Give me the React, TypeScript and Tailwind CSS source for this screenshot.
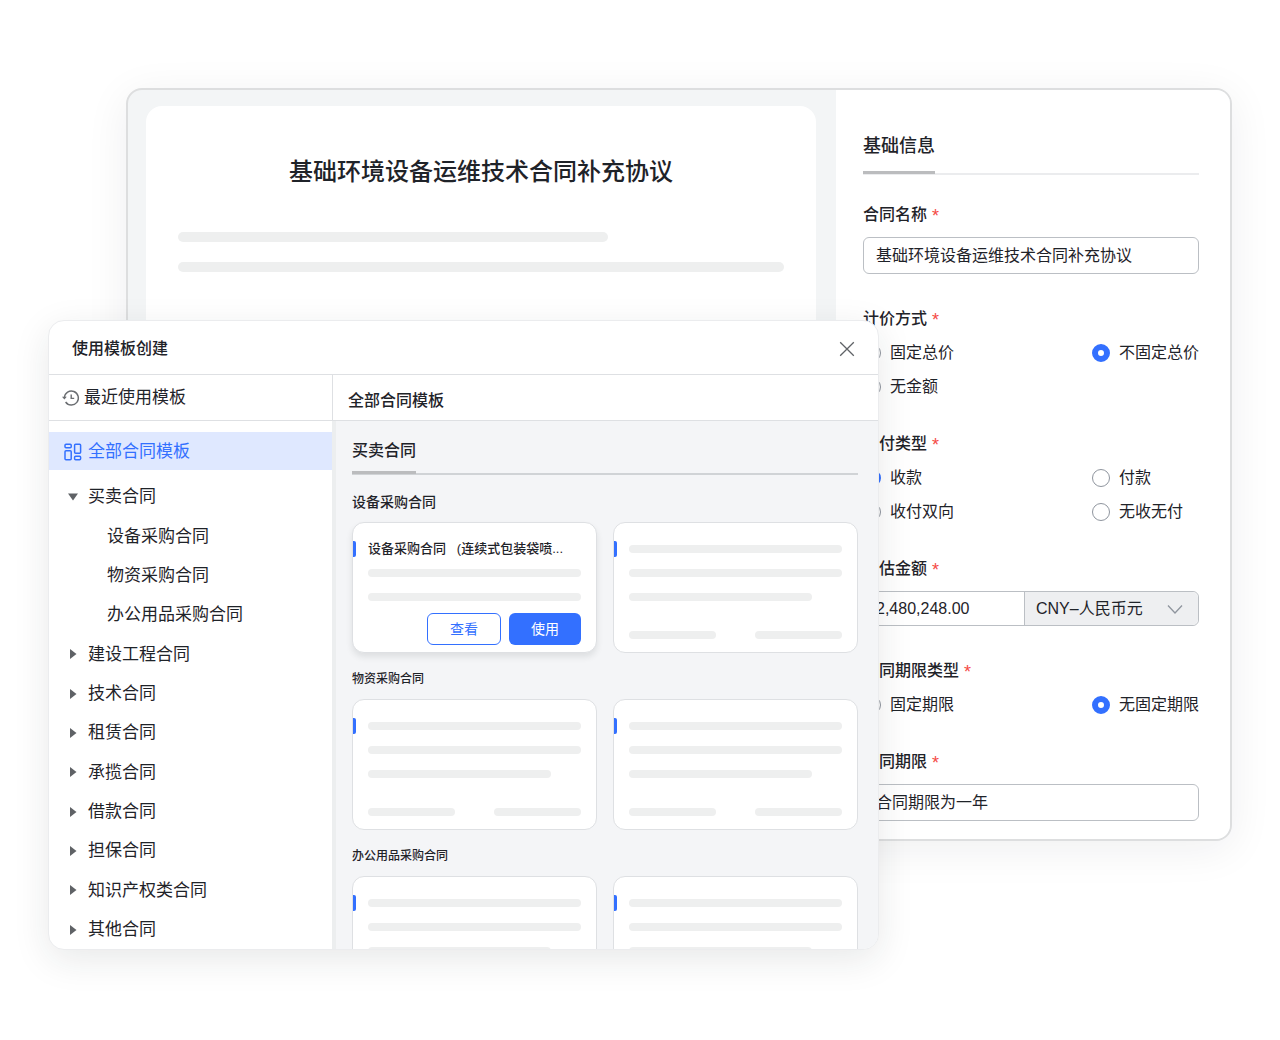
import { useState } from "react";

const categories = [
  { name: "买卖合同", open: true },
  { name: "设备采购合同", child: true },
  { name: "物资采购合同", child: true },
  { name: "办公用品采购合同", child: true },
  { name: "建设工程合同" },
  { name: "技术合同" },
  { name: "租赁合同" },
  { name: "承揽合同" },
  { name: "借款合同" },
  { name: "担保合同" },
  { name: "知识产权类合同" },
  { name: "其他合同" },
];

function HistoryIcon() {
  return (
    <svg className="h-[18px] w-[18px] shrink-0" viewBox="0 0 18 18" fill="none" stroke="#6b6e72" strokeWidth="1.4" aria-hidden="true">
      <path d="M2.4 8.6A7 7 0 1 1 3.6 13" />
      <path d="M9.2 5.6V9.4H12.2" />
      <path d="M0 7.8H4.8L2.4 10.6Z" fill="#6b6e72" stroke="none" />
    </svg>
  );
}

function TemplatesIcon() {
  return (
    <svg className="h-[18px] w-[18px] shrink-0" viewBox="0 0 18 18" fill="none" stroke="#3370ff" strokeWidth="1.5" aria-hidden="true">
      <rect x="1" y="1.2" width="6.2" height="3.6" rx="1" />
      <rect x="1" y="7.8" width="6.2" height="9" rx="1" />
      <rect x="10.6" y="1.2" width="6" height="9" rx="1" />
      <rect x="10.6" y="13.2" width="6" height="3.6" rx="1" />
    </svg>
  );
}

function Caret({ open }: { open?: boolean }) {
  return (
    <svg className="h-3 w-3 shrink-0" viewBox="0 0 12 12" fill="#5f6266" aria-hidden="true">
      <path d={open ? "M1 2.5H11L6 9.5Z" : "M3 1L9.5 6L3 11Z"} />
    </svg>
  );
}

function Bar({ className }: { className: string }) {
  return <div className={`h-2 rounded-full bg-[#eeefef] ${className}`} />;
}

function TemplateCard({ title }: { title?: string }) {
  return (
    <article
      className={`h-[131px] rounded-xl border border-[#dee0e3] bg-white pt-4 ${title ? "shadow-[0_4px_6px_rgba(31,35,41,0.1)]" : ""}`}
    >
      <div className="flex h-5 items-center">
        <span className="h-4 w-[3px] shrink-0 rounded-r-xs bg-[#3370ff]" />
        <div className="mr-[15px] ml-3 min-w-0 flex-1">
          {title ? <h4 className="text-[13px] leading-5 font-medium whitespace-pre">{title}</h4> : <Bar className="w-full" />}
        </div>
      </div>
      <div className="mt-[10px] px-[15px]">
        <Bar className="w-full" />
        <Bar className={title ? "mt-4 w-full" : "mt-4 w-[86%]"} />
        {title ? (
          <div className="mt-3 flex justify-end gap-2">
            <button type="button" className="h-8 w-[74px] rounded-md border border-[#3370ff] bg-white text-sm text-[#3370ff]">
              查看
            </button>
            <button type="button" className="h-8 w-[72px] rounded-md bg-[#3370ff] text-sm text-white">
              使用
            </button>
          </div>
        ) : (
          <div className="mt-[30px] flex justify-between">
            <Bar className="w-[41%]" />
            <Bar className="w-[41%]" />
          </div>
        )}
      </div>
    </article>
  );
}

function TemplateGroup({ name, size, first }: { name: string; size: string; first?: string }) {
  return (
    <section>
      <h3 className={`${size} mb-[10px] leading-5 font-medium`}>{name}</h3>
      <div className="grid grid-cols-2 gap-4">
        <TemplateCard title={first} />
        <TemplateCard />
      </div>
    </section>
  );
}

function Star() {
  return <span className="ml-[5px] align-[-2px] text-lg leading-4 font-normal text-[#f54a45]">*</span>;
}

function TextField({ id, label, value }: { id: string; label: string; value: string }) {
  const [text, setText] = useState(value);
  return (
    <div>
      <label htmlFor={id} className="mb-[10px] block h-6 text-base leading-6 font-medium">
        {label}
        <Star />
      </label>
      <input
        id={id}
        value={text}
        onChange={(e) => setText(e.target.value)}
        className="block h-[37px] w-full rounded-md border border-[#bbbfc4] bg-white px-3 pb-1 text-base outline-none"
      />
    </div>
  );
}

function RadioField({ name, label, options, value }: { name: string; label: string; options: string[]; value: string }) {
  const [picked, setPicked] = useState(value);
  return (
    <fieldset>
      <legend className="mb-[10px] h-6 text-base leading-6 font-medium">
        {label}
        <Star />
      </legend>
      <div className="grid grid-cols-[1fr_107px] gap-y-[10px]">
        {options.map((option) => (
          <label key={option} className="flex items-center gap-[9px] text-base leading-6 whitespace-nowrap">
            <input
              type="radio"
              name={name}
              checked={picked === option}
              onChange={() => setPicked(option)}
              className="h-[18px] w-[18px] shrink-0 appearance-none rounded-full border border-[#8f959e] bg-white checked:border-[6px] checked:border-[#3370ff]"
            />
            {option}
          </label>
        ))}
      </div>
    </fieldset>
  );
}

function AmountField() {
  const [amount, setAmount] = useState("2,480,248.00");
  return (
    <div>
      <label htmlFor="amount" className="mb-[10px] block h-6 text-base leading-6 font-medium">
        预估金额
        <Star />
      </label>
      <div className="flex h-[35px] rounded-md border border-[#bbbfc4]">
        <input
          id="amount"
          value={amount}
          onChange={(e) => setAmount(e.target.value)}
          className="min-w-0 flex-1 rounded-l-md bg-white px-3 text-base outline-none"
        />
        <div className="relative flex w-[174px] border-l border-[#bbbfc4]">
          <select aria-label="币种" className="w-full appearance-none rounded-r-md bg-[#eeeff1] pr-9 pl-[11px] text-base outline-none">
            <option>CNY–人民币元</option>
          </select>
          <svg
            className="pointer-events-none absolute top-1/2 right-[15px] h-4 w-4 -translate-y-1/2"
            viewBox="0 0 16 16"
            fill="none"
            stroke="#8f959e"
            strokeWidth="1.3"
            aria-hidden="true"
          >
            <path d="M1 4.5L8 12L15 4.5" />
          </svg>
        </div>
      </div>
    </div>
  );
}

function ContractEditor() {
  return (
    <main className="flex overflow-hidden rounded-2xl border-2 border-[#dddedf] bg-[#f3f5f6] shadow-[0_8px_44px_rgba(31,35,41,0.07)]">
      <article className="mt-4 mr-5 ml-[18px] flex-1 rounded-t-2xl bg-white px-8 pt-[50px]">
        <h1 className="text-center text-2xl leading-8 font-medium">基础环境设备运维技术合同补充协议</h1>
        <div className="mt-11 h-[10px] w-[71%] rounded-full bg-[#eeefef]" />
        <div className="mt-5 h-[10px] rounded-full bg-[#eeefef]" />
      </article>
      <form className="w-[394px] shrink-0 bg-white pt-[42px] pr-[31px] pb-[18px] pl-[27px]">
        <div className="mb-7 flex border-b-2 border-[#ebecee]">
          <h2 className="-mb-px rounded-t-xs border-b-[3px] border-[#bbbcbe] pb-[11px] text-lg leading-7 font-medium">基础信息</h2>
        </div>
        <div className="flex flex-col gap-[33px]">
          <TextField id="contract-name" label="合同名称" value="基础环境设备运维技术合同补充协议" />
          <RadioField name="pricing" label="计价方式" options={["固定总价", "不固定总价", "无金额"]} value="不固定总价" />
          <RadioField name="payment" label="收付类型" options={["收款", "付款", "收付双向", "无收无付"]} value="收款" />
          <AmountField />
          <RadioField name="term-type" label="合同期限类型" options={["固定期限", "无固定期限"]} value="无固定期限" />
          <TextField id="term" label="合同期限" value="合同期限为一年" />
        </div>
      </form>
    </main>
  );
}

function TemplateDialog() {
  return (
    <div
      role="dialog"
      aria-labelledby="dialog-title"
      className="absolute top-80 right-[401px] left-12 flex min-h-[630px] flex-col overflow-hidden rounded-2xl border border-[#ebecee] bg-white shadow-[0_10px_36px_rgba(31,35,41,0.1)]"
    >
      <header className="flex h-[54px] items-center justify-between border-b border-[#dee0e3] pt-[2px] pr-[23px] pl-[23px]">
        <h2 id="dialog-title" className="text-base font-medium">
          使用模板创建
        </h2>
        <button type="button" aria-label="关闭">
          <svg className="h-4 w-4" viewBox="0 0 16 16" fill="none" stroke="#5f6266" strokeWidth="1.3" aria-hidden="true">
            <path d="M1.2 1.2L14.8 14.8M14.8 1.2L1.2 14.8" />
          </svg>
        </button>
      </header>
      <div className="flex flex-1">
        <nav className="flex w-[283px] shrink-0 flex-col text-[17px]">
          <button type="button" className="flex h-[46px] items-center gap-1 border-b border-[#dee0e3] pl-[13px]">
            <HistoryIcon />
            最近使用模板
          </button>
          <button type="button" className="mt-[11px] flex h-[38px] items-center gap-[6px] bg-[#dfe8ff] pt-px pl-[15px] text-[#3370ff]">
            <TemplatesIcon />
            全部合同模板
          </button>
          <ul className="mt-[7px] grid flex-1 auto-rows-fr">
            {categories.map((c) => (
              <li key={c.name} className="flex min-h-9">
                <button type="button" className={`flex flex-1 items-center gap-[9px] pt-px ${c.child ? "pl-[58px]" : "pl-[18px]"}`}>
                  {!c.child && <Caret open={c.open} />}
                  {c.name}
                </button>
              </li>
            ))}
          </ul>
        </nav>
        <div className="flex min-w-0 flex-1 flex-col">
          <h2 className="flex h-[46px] items-center border-b border-l border-[#dee0e3] pt-[6px] pl-[15px] text-base font-medium">
            全部合同模板
          </h2>
          <div className="h-0 grow overflow-hidden border-l-4 border-[#eceeef] bg-[#f4f5f7] pt-[18px] pr-5 pl-4">
            <div className="mb-[17px] flex border-b-2 border-[#d0d3d6]">
              <h3 className="-mb-px border-b-[3px] border-[#bbbcbe] pb-2 text-base leading-6 font-medium">买卖合同</h3>
            </div>
            <div className="flex flex-col gap-4">
              <TemplateGroup name="设备采购合同" size="text-sm" first="设备采购合同   (连续式包装袋喷..." />
              <TemplateGroup name="物资采购合同" size="text-xs" />
              <TemplateGroup name="办公用品采购合同" size="text-xs" />
            </div>
          </div>
        </div>
      </div>
    </div>
  );
}

export default function App() {
  return (
    <div className="relative min-h-screen bg-white pt-[88px] pr-12 pl-[126px] font-['Liberation_Sans','Noto_Sans_CJK_SC',sans-serif] text-[#1f2329]">
      <ContractEditor />
      <TemplateDialog />
    </div>
  );
}
